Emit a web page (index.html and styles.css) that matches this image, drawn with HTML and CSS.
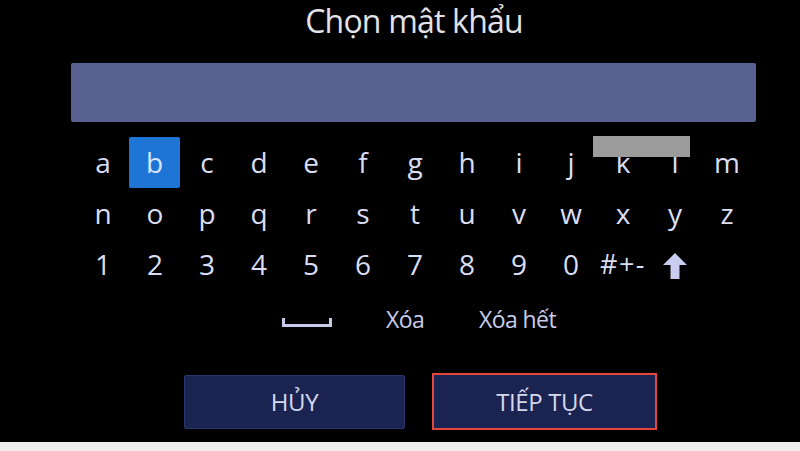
FILE: index.html
```html
<!DOCTYPE html>
<html lang="vi">
<head>
<meta charset="utf-8">
<link rel="stylesheet" href="styles.css">
</head>
<body>
<div class="screen">
  <h1 class="title">Chọn mật khẩu</h1>
  <div class="field"></div>
  <div class="keyboard">
    <span class="key">a</span><span class="key selected">b</span><span class="key">c</span><span class="key">d</span><span class="key">e</span><span class="key">f</span><span class="key">g</span><span class="key">h</span><span class="key">i</span><span class="key">j</span><span class="key">k</span><span class="key">l</span><span class="key">m</span>
    <span class="key">n</span><span class="key">o</span><span class="key">p</span><span class="key">q</span><span class="key">r</span><span class="key">s</span><span class="key">t</span><span class="key">u</span><span class="key">v</span><span class="key">w</span><span class="key">x</span><span class="key">y</span><span class="key">z</span>
    <span class="key">1</span><span class="key">2</span><span class="key">3</span><span class="key">4</span><span class="key">5</span><span class="key">6</span><span class="key">7</span><span class="key">8</span><span class="key">9</span><span class="key">0</span><span class="key sym">#+-</span>
    <span class="key"><svg class="shift" width="24" height="26" viewBox="0 0 24 26"><polygon points="12,0 24,12 16.5,12 16.5,26 7.5,26 7.5,12 0,12" /></svg></span>
    <div class="redact"></div>
  </div>
  <div class="actions">
    <span class="space"><svg width="50" height="10" viewBox="0 0 50 10"><path d="M1.5 1 V8.5 H48.5 V1" /></svg></span>
    <span class="action del">Xóa</span>
    <span class="action clear">Xóa hết</span>
  </div>
  <div class="buttons">
    <div class="btn cancel">HỦY</div>
    <div class="btn next">TIẾP TỤC</div>
  </div>
</div>
<div class="strip"></div>
</body>
</html>
```
FILE: styles.css
```css
html, body {
  margin: 0;
  padding: 0;
  background: #000;
}
body {
  width: 800px;
  height: 451px;
  overflow: hidden;
  font-family: "Open Sans", "Noto Sans", sans-serif;
}
.screen {
  height: 442px;
  background: #000;
  display: flex;
  flex-direction: column;
  align-items: stretch;
}
.title {
  margin: 0;
  height: 63px;
  box-sizing: border-box;
  padding-top: 1px;
  text-align: center;
  font-weight: 400;
  font-size: 32px;
  line-height: 40px;
  color: #e2e2e8;
  letter-spacing: -0.8px;
  padding-left: 28px;
}
.field {
  margin-left: 71px;
  width: 685px;
  height: 59px;
  background: #5a6291;
  border-radius: 2px;
}
.keyboard {
  position: relative;
  margin-top: 15px;
  margin-left: 77px;
  width: 676px;
  display: grid;
  grid-template-columns: repeat(13, 52px);
  grid-auto-rows: 51px;
}
.key {
  display: flex;
  align-items: center;
  justify-content: center;
  font-size: 28px;
  color: #dadef4;
  line-height: 1;
  padding-bottom: 2px;
  box-sizing: border-box;
}
.key.selected {
  background: #1e75d6;
  border-radius: 2px;
  margin: 0 1px 0 0;
  color: #d8e6ff;
}
.key.sym {
  font-size: 27px;
  letter-spacing: 1.5px;
  white-space: nowrap;
}
.shift {
  fill: #c9cef0;
  margin-top: 4px;
}
.redact {
  position: absolute;
  left: 516px;
  top: -1px;
  width: 97px;
  height: 21px;
  background: #9b9b9b;
}
.actions {
  height: 56px;
  display: flex;
  align-items: center;
  padding-top: 2px;
  box-sizing: border-box;
}
.space {
  margin-left: 282px;
  display: flex;
  padding-top: 6px;
}
.space svg path {
  fill: none;
  stroke: #c6cae6;
  stroke-width: 3;
}
.action {
  font-size: 23px;
  color: #c9cdea;
  letter-spacing: -0.6px;
}
.del {
  margin-left: 54px;
}
.clear {
  margin-left: 55px;
}
.buttons {
  margin-top: 27px;
  display: flex;
  align-items: center;
  padding-left: 184px;
  gap: 27px;
}
.btn {
  box-sizing: border-box;
  display: flex;
  align-items: center;
  justify-content: center;
  background: #1b2351;
  color: #d4d8ec;
  font-size: 24px;
  letter-spacing: -0.4px;
  font-weight: 500;
  padding-bottom: 1px;
}
.cancel {
  width: 221px;
  height: 54px;
  border: 1px solid #2c356a;
  border-radius: 2px;
}
.next {
  width: 225px;
  height: 57px;
  border: 2px solid #e3473e;
}
.strip {
  height: 9px;
  background: #eeeeee;
}
```
